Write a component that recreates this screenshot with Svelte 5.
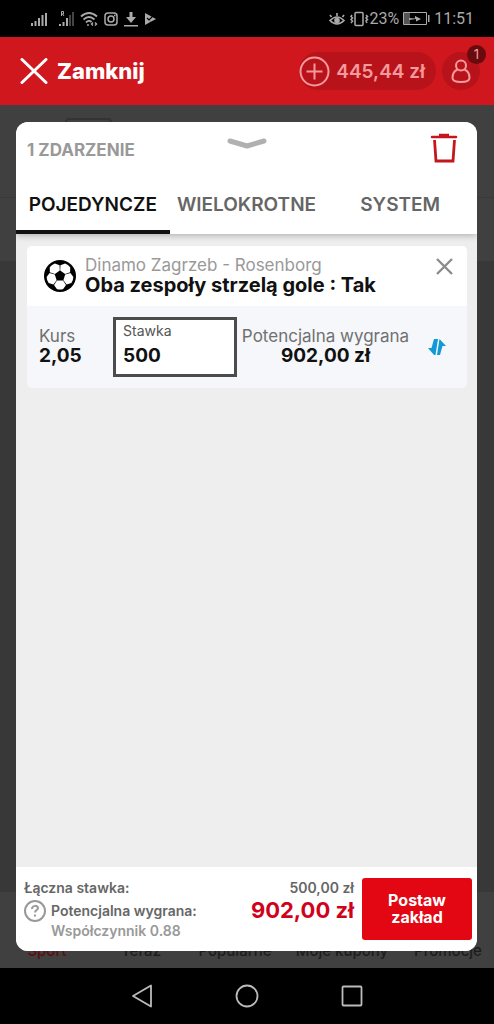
<script>
  let stake = $state('500');
  let active = $state('POJEDYNCZE');
  const tabs = ['POJEDYNCZE', 'WIELOKROTNE', 'SYSTEM'];
  const links = ['Sport', 'Teraz', 'Popularne', 'Moje kupony', 'Promocje'];
</script>

<div class="screen">
  <div class="status">
    <div class="group left">
      <svg width="17" height="16" viewBox="0 0 17 16" stroke="#aaa" stroke-width="2"><path d="M2 12v3M5.500 10v5M9 7v8M12.500 4v11M16 2v13" /></svg>
      <svg class="roaming" width="15" height="16" viewBox="0 0 15 16" fill="none" stroke="#aaa"><path stroke-width="1" d="M2.500 5V.5h2V3h-2M3.500 3L5 5" /><path stroke-width="2" d="M1 13v2M4.500 11v4M8 7v8" /><path stroke="#444" stroke-width="2" d="M11 4v11M14 1v14" /></svg>
      <svg width="18" height="16" viewBox="0 0 18 16" fill="none" stroke="#aaa" stroke-width="1.800"><path d="M1 5.500q8-7 16 0M3.500 8.500q5.500-5 11 0M6 11.500q3-3 5.500-.5" /><path stroke-width="1.400" d="M8 13v2M13 11.500l-1.500 1.500 1.500 1.500M15 11.500l1.500 1.500-1.500 1.500" /></svg>
      <svg width="14" height="16" viewBox="0 0 14 16" fill="none" stroke="#aaa" stroke-width="1.500"><rect x="1" y="2" width="12" height="12" rx="3" /><circle cx="7" cy="8" r="3" /><path d="M10 4.500h1.500" /></svg>
      <svg class="download" width="14" height="16" viewBox="0 0 14 16" fill="#aaa"><path d="M5.500 1h3v5H12l-5 6-5-6h3.500zM0 14h14v1.500H0z" /></svg>
      <svg class="play" width="12" height="14" viewBox="0 0 12 14"><path fill="#aaa" d="M1 1l11 6-11 6z" /><path fill="none" stroke="#000" stroke-width="1.200" d="M3 6l2 2 5-5M6 10l2 2" /></svg>
    </div>
    <div class="group">
      <svg width="16" height="16" viewBox="0 0 16 16" fill="none" stroke="#aaa" stroke-width="1.600"><path d="M1 9.500q7-7 14 0-7 7-14 0zM2.500 6L1 4M8 5V2M13.500 6L15 4" /><circle cx="8" cy="9.500" r="2" fill="#aaa" /></svg>
      <svg class="vibrate" width="20" height="16" viewBox="0 0 20 16" fill="none" stroke="#aaa" stroke-width="1.500"><rect x="6" y="1.500" width="8" height="13" rx="1" /><path d="M3 4l-1 1.500L3.500 7 2 8.500 3.500 10 2 12M17 4l1.500 1.500L17 7l1.500 1.500L17 10l1 2" /></svg>
      <span>23%</span>
      <svg class="battery" width="27" height="14" viewBox="0 0 27 14"><path fill="none" stroke="#aaa" d="M.5.500h23v12H.5z" /><path fill="#555" d="M1 1h6v11H1z" /><path fill="#aaa" d="M25 3h1.500v7H25zM6 6l6 .5V4l6 3-5 2.500V7L6 8z" /></svg>
      <span>11:51</span>
    </div>
  </div>

  <header>
    <button class="close">
      <svg width="28" height="26" viewBox="0 0 28 26" stroke="#fff" stroke-width="3" stroke-linecap="round"><path d="M2 1.500l24 23M26 1.500l-24 23" /></svg>
      Zamknij
    </button>
    <button class="balance">
      <svg width="31" height="31" viewBox="0 0 31 31" fill="none" stroke="#f59a9c" stroke-width="2"><circle cx="15.500" cy="15.500" r="14" /><path d="M15.500 7.500v16M7.500 15.500h16" /></svg>
      445,44 zł
    </button>
    <button class="user" aria-label="Konto">
      <svg width="20" height="25" viewBox="0 0 20 25" fill="none" stroke="#f59a9c" stroke-width="2"><circle cx="10" cy="6.500" r="5" /><path d="M6.500 10.500C3 12 1.500 15 1.500 19c0 3 4 4 8.500 4s8.500-1 8.500-4c0-4-1.500-7-5-8.500" /></svg>
      <span class="badge">1</span>
    </button>
  </header>

  <div class="stage">
    <div class="page">
      <div class="page-top"><i></i></div>
      <div class="page-sub"></div>
      <div class="page-body"></div>
      <nav>
        {#each links as link, i}
          <a href="#{i}" class:current={i === 0}>{link}</a>
        {/each}
      </nav>
    </div>

    <main class="sheet">
      <div class="top">
        <div class="head">
          <h1>1 ZDARZENIE</h1>
          <button aria-label="Zwiń">
            <svg width="40" height="12" viewBox="0 0 40 12" fill="none" stroke="#b0b0b0" stroke-width="5" stroke-linecap="round" stroke-linejoin="round"><path d="M3 3l17 5 17-5" /></svg>
          </button>
          <button class="trash" aria-label="Usuń wszystko">
            <svg width="28" height="30" viewBox="0 0 28 30" fill="none" stroke="#c4161c"><path stroke-width="2.500" stroke-linecap="round" d="M2 4h24" /><path stroke-width="2.500" d="M9 2h10" /><path stroke-width="2.800" d="M4.500 7l1.500 21h17l1.500-21" /></svg>
          </button>
        </div>
        <div class="tabs">
          {#each tabs as tab}
            <button class:active={active === tab} onclick={() => (active = tab)}>{tab}</button>
          {/each}
        </div>
      </div>

      <div class="list">
        <article>
          <div class="event">
            <svg width="32" height="32" viewBox="0 0 32 32">
              <circle cx="16" cy="16" r="16" />
              {#each [0, 72, 144, 216, 288] as angle}
                <path fill="#fff" transform="rotate({angle} 16 16)" d="M13 20.500h6l3 4.500-2.800 4q-3.200 1-6.400 0L10 25z" />
              {/each}
            </svg>
            <div class="names">
              <p>Dinamo Zagrzeb - Rosenborg</p>
              <h2>Oba zespoły strzelą gole : Tak</h2>
            </div>
            <button class="remove" aria-label="Usuń">
              <svg width="17" height="17" viewBox="0 0 17 17" stroke="#8c8c8c" stroke-width="2.400"><path d="M1 1l15 15M16 1L1 16" /></svg>
            </button>
          </div>
          <div class="bet">
            <div class="odds"><span>Kurs</span><b>2,05</b></div>
            <label class="stake"><span>Stawka</span><input bind:value={stake} inputmode="decimal" /></label>
            <div class="win"><span>Potencjalna wygrana</span><b>902,00 zł</b></div>
            <svg width="18" height="18" viewBox="0 0 18 18" fill="#109ad6"><path d="M6 1h4L7.500 17H6L0 10h3.500zM11.500 1L18 8h-3.500L12 17H9z" /></svg>
          </div>
        </article>
      </div>

      <footer>
        <div class="sums">
          <div class="line"><span>Łączna stawka:</span><span>500,00 zł</span></div>
          <div class="line main">
            <svg width="22" height="22" viewBox="0 0 22 22" fill="none" stroke="#999" stroke-width="2"><circle cx="11" cy="11" r="10" /><path d="M8 9c0-4 6-4 6-1 0 2-3 2-3 4.500M11 14.500v2" /></svg>
            <span class="label">Potencjalna wygrana:</span>
            <strong>902,00 zł</strong>
          </div>
          <div class="factor">Współczynnik 0.88</div>
        </div>
        <button class="place">Postaw zakład</button>
      </footer>
    </main>
  </div>

  <div class="system">
    <button aria-label="Wstecz"><svg width="22" height="24" viewBox="0 0 22 24" fill="none" stroke="#bbb" stroke-width="1.800" stroke-linejoin="round"><path d="M20 1.500v21L2 12z" /></svg></button>
    <button aria-label="Ekran główny"><svg width="24" height="24" viewBox="0 0 24 24" fill="none" stroke="#bbb" stroke-width="1.800"><circle cx="12" cy="12" r="10.500" /></svg></button>
    <button aria-label="Ostatnie"><svg width="22" height="22" viewBox="0 0 22 22" fill="none" stroke="#bbb" stroke-width="1.800"><rect x="1.500" y="1.500" width="19" height="19" rx="1" /></svg></button>
  </div>
</div>

<style>
  :global(body) { margin: 0; background: #000; }
  .screen { min-height: 100vh; display: flex; flex-direction: column; font-family: Inter, "Open Sans", sans-serif; }
  * { box-sizing: border-box; }
  svg { display: block; flex: none; }
  button { border: 0; padding: 0; background: none; font-family: inherit; cursor: pointer; }
  h1, h2, p { margin: 0; }

  .status { height: 37px; padding: 0 20px 0 30px; display: flex; align-items: center; justify-content: space-between; background: #000; color: #aaa; font: 16px Roboto, sans-serif; }
  .group { display: flex; align-items: center; }
  .left { gap: 6px; }
  .roaming { margin-left: 6px; }
  .vibrate { margin-left: 4px; }
  .battery { margin: 0 4px; }

  header { height: 68px; padding: 0 14px 0 20px; display: flex; align-items: center; gap: 6px; background: #d1171e; }
  .close { display: flex; align-items: center; gap: 9px; margin-right: auto; color: #fff; font-size: 22px; font-weight: 800; }
  .balance { height: 38px; padding: 0 11px 0 0; display: flex; align-items: center; gap: 6px; border-radius: 19px; background: #b8131a; color: #f59a9c; font-size: 19px; font-weight: 600; }
  .user { position: relative; width: 38px; height: 38px; display: grid; place-items: center; border-radius: 50%; background: #b8131a; }
  .badge { position: absolute; top: -7px; right: -6px; width: 19px; height: 19px; border-radius: 50%; background: #680a0e; color: #f0a0a2; font-size: 13px; line-height: 19px; }

  .stage { flex: 1; position: relative; display: flex; padding: 17px 17px 17px 16px; }
  .page { position: absolute; inset: 0; display: flex; flex-direction: column; background: #404040; }
  .page-top { height: 93px; padding: 13px 65px; border-bottom: 1px solid #393939; }
  .page-top i { display: block; width: 47px; height: 30px; border: 2px solid #333; border-radius: 4px; }
  .page-sub { height: 63px; }
  .page-body { flex: 1; background: #383838; }
  nav { height: 76px; padding-bottom: 8px; display: grid; grid-template-columns: 94fr 94fr 94fr 120fr 92fr; align-items: end; background: #404040; }
  nav a { text-align: center; color: #1c1c1c; font-size: 15px; font-weight: 500; text-decoration: none; white-space: nowrap; }
  nav .current { color: #5c0c10; }

  .sheet { position: relative; flex: 1; min-width: 0; display: flex; flex-direction: column; border-radius: 12px; overflow: hidden; background: #eee; }
  .top { position: relative; background: #fff; box-shadow: 0 1px 7px rgba(0, 0, 0, 0.3); }
  .head { height: 56px; padding: 0 11px; display: grid; grid-template-columns: 1fr auto 1fr; align-items: center; white-space: nowrap; }
  .head button { padding-bottom: 12px; }
  .head .trash { justify-self: end; padding: 0 8px 4px; }
  h1 { color: #999; font-size: 17px; font-weight: 700; }
  .tabs { display: grid; grid-template-columns: repeat(3, 1fr); }
  .tabs button { height: 56px; border-bottom: 4px solid transparent; color: #666; font-size: 19px; font-weight: 600; }
  .tabs .active { color: #111; border-color: #111; }

  .list { flex: 1; padding: 12px 10px 12px 11px; }
  article { border-radius: 5px; overflow: hidden; background: #f5f7fa; }
  .event { height: 60px; padding: 0 14px 0 17px; display: flex; align-items: center; background: #fff; }
  .names { flex: 1; padding: 0 0 3px 9px; white-space: nowrap; }
  .names p { color: #999; font-size: 17px; line-height: 20px; }
  h2 { color: #111; font-size: 20px; line-height: 20px; font-weight: 700; }
  .remove { align-self: flex-start; padding-top: 12px; }
  .bet { height: 82px; padding: 0 21px 0 12px; display: flex; align-items: center; color: #707070; font-size: 17px; white-space: nowrap; }
  .bet b { color: #111; font-size: 19px; }
  .odds, .win { padding-bottom: 3px; display: flex; flex-direction: column; line-height: 20px; }
  .odds { width: 74px; }
  .stake { width: 124px; height: 60px; padding: 3px 7px; display: flex; flex-direction: column; border: 3px solid #4c4c4c; background: #fff; color: #555; font-size: 14px; line-height: 16px; }
  .stake input { width: 100%; height: 32px; padding: 0; border: 0; outline: 0; background: none; color: #111; font-family: inherit; font-size: 19px; font-weight: 700; }
  .win { flex: 1; align-items: center; padding-right: 14px; }

  footer { padding: 11px 5px 11px 8px; display: flex; gap: 8px; background: #fff; color: #666; font-size: 14px; font-weight: 600; }
  .sums { flex: 1; white-space: nowrap; }
  .line { display: flex; align-items: center; justify-content: space-between; line-height: 19px; }
  .main { height: 27px; gap: 5px; }
  .main .label { flex: 1; }
  strong { color: #d0021b; font-size: 22px; font-weight: 700; }
  .factor { padding-left: 27px; color: #999; line-height: 13px; }
  .place { width: 110px; height: 62px; padding: 0 16px; border-radius: 3px; background: #e30613; color: #fff; font-size: 16px; line-height: 17px; font-weight: 700; }

  .system { height: 56px; padding: 0 131px; display: flex; align-items: center; justify-content: space-between; background: #000; }
</style>
